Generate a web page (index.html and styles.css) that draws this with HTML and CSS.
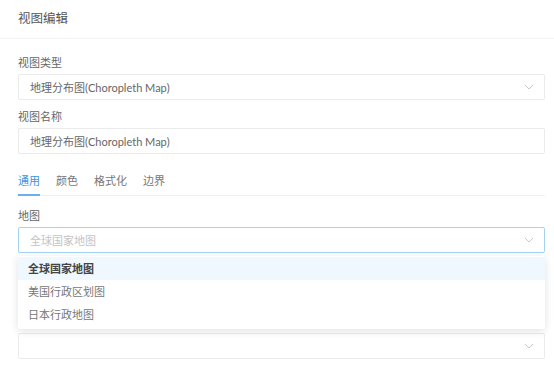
FILE: index.html
```html
<!DOCTYPE html>
<html lang="zh-CN">
<head>
    <meta charset="UTF-8">
    <title>视图编辑</title>
    <link rel="stylesheet" href="styles.css">
</head>
<body>
    <div class="header">视图编辑</div>

    <div class="content">
        <div class="form-item">
            <div class="label">视图类型</div>
            <div class="select">
                <span>地理分布图(Choropleth Map)</span>
                <svg class="arrow" width="10" height="6" viewBox="0 0 10 6"><path d="M1 1l4 4 4-4" fill="none" stroke="#c6c9cf" stroke-width="1"/></svg>
            </div>
        </div>

        <div class="form-item">
            <div class="label">视图名称</div>
            <div class="input">地理分布图(Choropleth Map)</div>
        </div>

        <div class="tabs">
            <div class="tab active">通用</div>
            <div class="tab">颜色</div>
            <div class="tab">格式化</div>
            <div class="tab">边界</div>
        </div>

        <div class="form-item map-item">
            <div class="label">地图</div>
            <div class="select focused">
                <span class="placeholder">全球国家地图</span>
                <svg class="arrow" width="10" height="6" viewBox="0 0 10 6"><path d="M1 1l4 4 4-4" fill="none" stroke="#c6c9cf" stroke-width="1"/></svg>
            </div>
            <div class="dropdown">
                <div class="option selected">全球国家地图</div>
                <div class="option">美国行政区划图</div>
                <div class="option">日本行政地图</div>
            </div>
        </div>

        <div class="form-item last-item">
            <div class="select">
                <span></span>
                <svg class="arrow" width="10" height="6" viewBox="0 0 10 6"><path d="M1 1l4 4 4-4" fill="none" stroke="#c6c9cf" stroke-width="1"/></svg>
            </div>
        </div>
    </div>
</body>
</html>
```

FILE: styles.css
```css
body {
    margin: 0;
    font-family: Lato, "Noto Sans CJK SC", sans-serif;
    font-size: 11px;
    color: #666;
    background: white;
}
.header {
    height: 38px;
    line-height: 37px;
    padding: 0 18px;
    font-size: 12.5px;
    color: #555;
    border-bottom: 1px solid #f2f2f2;
}
.content {
    padding: 16px 9px 0 18px;
}
.form-item {
    margin-bottom: 9px;
}
.label {
    line-height: 16px;
    margin-bottom: 3px;
    color: #666;
}
.select, .input {
    display: flex;
    align-items: center;
    justify-content: space-between;
    height: 24px;
    padding: 0 10px 0 11px;
    border: 1px solid #ebebeb;
    border-radius: 2px;
    color: #666;
}
.select.focused {
    border-color: #a6d2f4;
}
.placeholder {
    color: #c4c4c4;
}
.arrow {
    display: block;
}
.tabs {
    display: flex;
    gap: 16px;
    margin-top: 16px;
    border-bottom: 1px solid #f0f0f0;
}
.tab {
    line-height: 22px;
    padding-bottom: 2px;
    margin-bottom: -1px;
    border-bottom: 2px solid transparent;
    color: #777;
}
.tab.active {
    color: #3d95e0;
    border-bottom-color: #6cb0ec;
}
.map-item {
    position: relative;
    margin-top: 12px;
}
.dropdown {
    position: absolute;
    left: 0;
    right: 0;
    top: 48px;
    padding: 1px 0 3px;
    background: white;
    box-shadow: 0 2px 8px rgba(0, 0, 0, 0.12);
    border-radius: 2px;
    z-index: 2;
}
.option {
    line-height: 23px;
    padding: 0 10px;
    color: #777;
}
.option.selected {
    background: #eef8fe;
    color: #444;
    font-weight: bold;
}
.last-item {
    margin-top: 80px;
}
```
